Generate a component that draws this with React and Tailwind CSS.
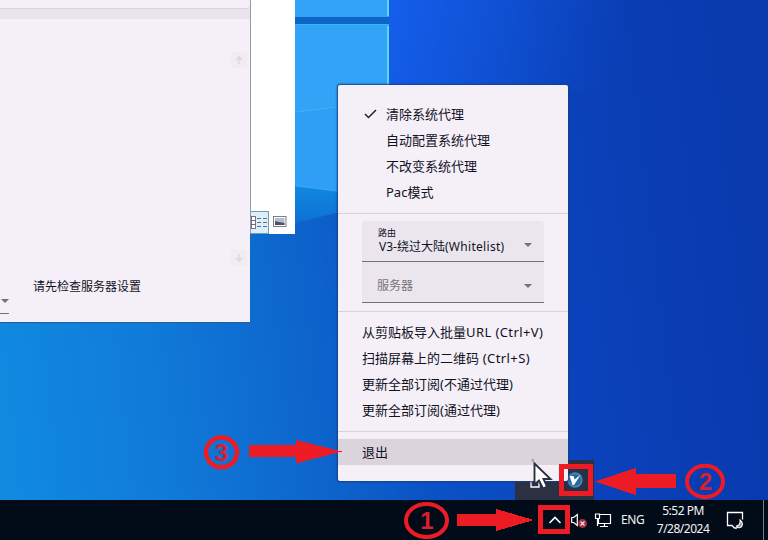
import React from "react";

const systemProxyModes = [
  { label: "清除系统代理", checked: true },
  { label: "自动配置系统代理" },
  { label: "不改变系统代理" },
  { label: "Pac模式" },
];

const actions = [
  { label: "从剪贴板导入批量", latin: "URL (Ctrl+V)" },
  { label: "扫描屏幕上的二维码", latin: " (Ctrl+S)" },
  { label: "更新全部订阅(不通过代理)" },
  { label: "更新全部订阅(通过代理)" },
];

function Wallpaper() {
  return (
    <svg className="absolute inset-0 h-[500px] w-[768px]" viewBox="0 0 768 500">
      <defs>
        <linearGradient id="sky" gradientUnits="userSpaceOnUse" x1="0" y1="420" x2="768" y2="330">
          <stop offset="0" stopColor="#118ae0" />
          <stop offset="0.2" stopColor="#107bd9" />
          <stop offset="0.42" stopColor="#0d63cb" />
          <stop offset="0.55" stopColor="#0b51c5" />
          <stop offset="0.75" stopColor="#0b42bb" />
          <stop offset="1" stopColor="#0939ad" />
        </linearGradient>
        <linearGradient id="topGlow" gradientUnits="userSpaceOnUse" x1="388" y1="0" x2="620" y2="50">
          <stop offset="0" stopColor="#145feb" />
          <stop offset="0.5" stopColor="#0f50d2" />
          <stop offset="1" stopColor="#0d48c4" stopOpacity="0" />
        </linearGradient>
        <linearGradient id="beam" x1="0" y1="0" x2="0" y2="1">
          <stop offset="0" stopColor="#118be2" />
          <stop offset="1" stopColor="#0d70d4" />
        </linearGradient>
      </defs>
      <rect width="768" height="500" fill="url(#sky)" />
      <rect x="388" width="240" height="90" fill="url(#topGlow)" />
      <path d="M290 180L345 188V211L290 224Z" fill="url(#beam)" />
      <path d="M290 0H389V192L338 191L290 185Z" fill="#33a3f7" />
      <path d="M290 113L340 106V191L290 185Z" fill="#2f9ff5" />
      <path d="M297 112L340 106.500" stroke="#50c8fb" strokeDasharray="1 1" />
      <path d="M296 186L338 191" stroke="#35adfa" strokeWidth="1" />
      <rect x="290" y="17" width="99" height="7" fill="#0c66c8" />
      <path d="M290 24.500H389" stroke="#37b4fb" />
      <path d="M388 0V16M388 26V85" stroke="#61dcff" strokeWidth="1.800" />
    </svg>
  );
}

function Caret() {
  return (
    <svg className="h-[4px] w-[8px]" viewBox="0 0 8 4">
      <path d="M0 0H8L4 4Z" fill="#756f7b" />
    </svg>
  );
}

function ScrollButton({ down }) {
  return (
    <div className="flex size-4 items-center justify-center bg-[#f0ecf2]">
      <svg className={down ? "size-2 rotate-180" : "size-2"} viewBox="0 0 8 8">
        <path d="M4 8V1M1 4L4 1L7 4" fill="none" stroke="#dcd7df" strokeWidth="1.500" />
      </svg>
    </div>
  );
}

function MainWindow() {
  return (
    <section className="absolute top-0 left-0 flex h-[322px] w-[250px] flex-col bg-[#f5eff7] shadow-[0_1px_1px_#25609f]">
      <div className="h-[9px] shrink-0 rounded-br border-b border-[#d8d2db]" />
      <div className="h-[10px] shrink-0 bg-[#e9e4eb]" />
      <div className="flex grow flex-col items-end pt-[33px] pr-[3px]">
        <ScrollButton />
        <div className="h-[182px]" />
        <ScrollButton down />
      </div>
      <div className="flex h-[56px] items-start">
        <div className="mt-[33px] flex h-[15px] w-[9px] justify-center border-b border-[#756f7b]">
          <Caret />
        </div>
        <p className="mt-[12px] ml-[24px] text-[12px] leading-[18px]">请先检查服务器设置</p>
      </div>
    </section>
  );
}

function ExplorerWindow() {
  return (
    <section className="absolute top-0 left-[250px] flex h-[234px] w-[45px] items-end border-l border-[#aaa5ae] bg-white">
      <svg className="h-[24px] w-[44px]" viewBox="0 0 44 24">
        <rect x="-1" y="1.500" width="18.500" height="22" fill="#d9effa" stroke="#779ba9" />
        <g fill="#fff" stroke="#686570" strokeWidth="0.900">
          <rect x="0.500" y="6.500" width="4" height="4" />
          <rect x="0.500" y="10.500" width="4" height="4" />
          <rect x="0.500" y="14.500" width="4" height="4" />
        </g>
        <path d="M6 8.500H10M12 8.500H16M6 12.500H10M12 12.500H16M6 16.500H10M12 16.500H16" stroke="#716d78" />
        <rect x="22.500" y="6.500" width="12.500" height="10" fill="#fff" stroke="#817b87" />
        <rect x="24" y="8" width="9.500" height="7" fill="#b4bdcc" />
        <path d="M24 11L28 12L33.500 13V15H24Z" fill="#4b5363" />
      </svg>
    </section>
  );
}

function RouteSelect() {
  return (
    <div className="flex h-[41px] items-center justify-between rounded-t-[4px] border-b border-[#756f7b] bg-[#ebe6ed] pt-[7px] pr-3 pl-4">
      <div className="mt-[-7px]">
        <div className="h-[12px] text-[9px] leading-[12px]">路由</div>
        <div className="ml-px h-[16px] text-[12px] leading-4 whitespace-nowrap">
          V3-绕过大陆<span className="tracking-[0.3px]">(Whitelist)</span>
        </div>
      </div>
      <Caret />
    </div>
  );
}

function ServerSelect() {
  return (
    <div className="flex h-[41px] items-center justify-between border-b border-[#756f7b] bg-[#ebe6ed] pt-[7px] pr-3 pl-[15px] text-[12px] leading-4 text-[#77727b]">
      <span className="pt-px">服务器</span>
      <Caret />
    </div>
  );
}

function TrayMenu() {
  return (
    <section className="absolute top-[85px] left-[338px] flex h-[396px] w-[230px] flex-col rounded-[2px] bg-[#f5eff7] text-[13px] shadow-[0_0_2px_1px_#173e86]">
      <ul className="h-[128px] pt-[16px]">
        {systemProxyModes.map((mode) => (
          <li key={mode.label} className="flex h-[26px] items-center pl-[26px]">
            <span className="w-[22px]">
              {mode.checked && (
                <svg className="h-[10px] w-[13px]" viewBox="0 0 13 10">
                  <path d="M1 5L4.500 8.500L12 1" fill="none" stroke="#20222b" strokeWidth="1.500" />
                </svg>
              )}
            </span>
            <span className="pt-px">{mode.label}</span>
          </li>
        ))}
      </ul>
      <div className="flex h-[99px] flex-col border-y border-[#d8d2db] px-6 pt-[7px]">
        <RouteSelect />
        <ServerSelect />
      </div>
      <ul className="h-[119px] pt-[7px] pl-6">
        {actions.map((action) => (
          <li key={action.label} className="flex h-[26px] items-center pt-px whitespace-pre">
            {action.label}
            <span className="tracking-[0.4px]">{action.latin}</span>
          </li>
        ))}
      </ul>
      <div className="border-t border-[#d8d2db] pt-[7px]">
        <div className="flex h-[26px] items-center bg-[#dbd4dc] pt-px pl-6">退出</div>
      </div>
    </section>
  );
}

function TrayOverflow() {
  return (
    <section className="absolute top-[460px] left-[515px] h-10 w-[79px] bg-[#2b3042]">
      <svg className="h-10 w-[79px]" viewBox="0 0 79 40">
        <path d="M16 20V27H24V20" fill="none" stroke="#fff" strokeWidth="1.300" />
        <circle cx="60" cy="20" r="7.700" fill="#3a88bd" />
        <circle cx="60" cy="20" r="5.800" fill="#2b6799" />
        <path d="M54.500 16H58.500L59.500 19.500L65.500 15L59 25H57.500Z" fill="#fff" />
      </svg>
    </section>
  );
}

function Taskbar() {
  return (
    <footer className="flex h-10 items-center bg-[#020b18] pl-[548px] text-[12px] text-[#f3f5f7]">
      <svg className="h-[8px] w-[14px] shrink-0" viewBox="0 0 14 8">
        <path d="M1.500 7L7 1.500L12.500 7" fill="none" stroke="#fff" strokeWidth="1.600" />
      </svg>
      <svg className="ml-[9px] h-5 w-[18px] shrink-0" viewBox="0 0 18 20">
        <path d="M0.700 7.500H2.700L6.300 4.500V15.500L2.700 12.500H0.700Z" fill="none" stroke="#fff" strokeWidth="1.200" />
        <circle cx="11.500" cy="13.500" r="4.500" fill="#a42c3d" />
        <path d="M9.500 11.500L13.500 15.500M13.500 11.500L9.500 15.500" stroke="#e8dde3" strokeWidth="1.400" />
      </svg>
      <svg className="ml-[5px] h-4 w-[18px] shrink-0" viewBox="0 0 18 16">
        <path d="M6 2.500H16.500V11.500H4.500V7M10.500 11.500V14.500M6 14.500H14M1.500 2H5.500V6.500H1.500ZM3.500 7V14" fill="none" stroke="#fff" strokeWidth="1.200" />
      </svg>
      <span className="ml-[9px] w-[36px] tracking-[-0.4px]">ENG</span>
      <div className="flex w-[52px] flex-col items-center text-[12px] leading-[18px] tracking-[-0.5px] whitespace-nowrap">
        <span>5:52 PM</span>
        <span>7/28/2024</span>
      </div>
      <svg className="ml-[17px] h-[18px] w-[18px] shrink-0" viewBox="0 0 18 18">
        <path d="M16.500 8.500V1.500H1.500V14.500H6L8.500 17H11" fill="none" stroke="#fff" strokeWidth="1.300" />
        <path d="M14 9C17 11 17.500 15 14 16.500C12.500 17 11 16.500 10.500 15C13 14.500 14.500 12.500 14 9Z" fill="#8a909a" stroke="#fff" strokeWidth="1.100" />
      </svg>
      <div className="ml-[19px] h-10 border-l border-[#737984]" />
    </footer>
  );
}

function Annotations() {
  return (
    <svg className="pointer-events-none absolute inset-0 h-[540px] w-[768px]" viewBox="0 0 768 540">
      <g fill="none" stroke="#ed1c24">
        <ellipse cx="221.500" cy="452.300" rx="15.500" ry="14.800" strokeWidth="4.500" />
        <ellipse cx="705" cy="481.500" rx="18" ry="15.700" strokeWidth="4" />
        <ellipse cx="426.500" cy="520.500" rx="20.500" ry="16.500" strokeWidth="4" />
        <rect x="561.500" y="466.500" width="29" height="27" strokeWidth="5" />
        <rect x="540.500" y="507.500" width="27" height="24" strokeWidth="5" />
      </g>
      <g fill="#ed1c24" shapeRendering="crispEdges">
        <path d="M249 445H296V440L342 451.500L296 463.500V457H249Z" />
        <path d="M676 474H636V468L595 481.500L636 495V487.500H676Z" />
        <path d="M457 514H496V509L534 520L496 531V526H457Z" />
      </g>
      <g
        className="font-['Liberation_Sans',sans-serif] font-bold"
        fill="#d81f30"
        fontSize="24"
        textAnchor="middle"
      >
        <text x="221.500" y="460.500">3</text>
        <text x="705.500" y="490">2</text>
        <text x="427" y="528.500">1</text>
      </g>
    </svg>
  );
}

function Cursor() {
  return (
    <svg className="absolute top-[459px] left-[530px] h-8 w-6" viewBox="0 0 24 32">
      <rect x="1.500" y="0" width="2.500" height="2.500" fill="#aaa3ad" />
      <path d="M4.500 4.500V25.500L9 21.500L13 29.500L17 27.500L13.500 20H20.500Z" fill="#fff" stroke="#2b3042" strokeWidth="1.900" />
    </svg>
  );
}

export default function App() {
  return (
    <main className="relative flex h-[540px] w-[768px] flex-col overflow-hidden font-['Noto_Sans','Noto_Sans_CJK_SC',sans-serif] text-[#10121f]">
      <div className="relative h-[500px] shrink-0 overflow-hidden">
        <Wallpaper />
        <ExplorerWindow />
        <MainWindow />
        <TrayOverflow />
        <TrayMenu />
      </div>
      <Taskbar />
      <Annotations />
      <Cursor />
    </main>
  );
}
